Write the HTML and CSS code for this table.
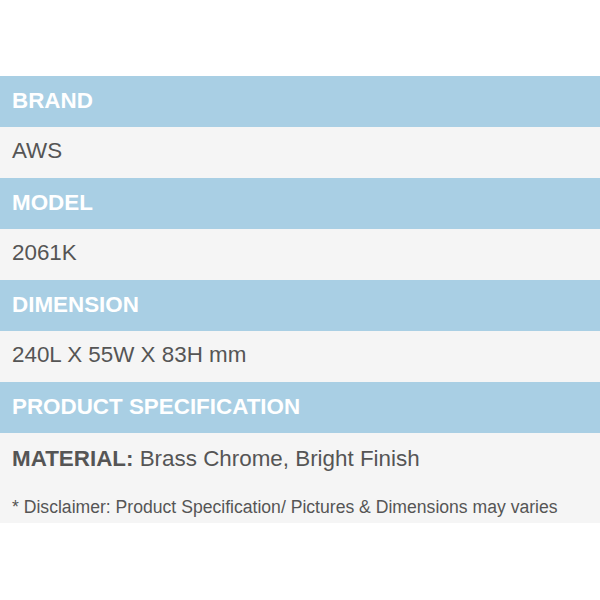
FILE: index.html
```html
<!DOCTYPE html>
<html>
<head>
<meta charset="utf-8">
<link rel="stylesheet" href="styles.css">
</head>
<body>
<div class="spec">
  <div class="head">BRAND</div>
  <div class="row">AWS</div>
  <div class="head">MODEL</div>
  <div class="row">2061K</div>
  <div class="head">DIMENSION</div>
  <div class="row">240L X 55W X 83H mm</div>
  <div class="head">PRODUCT SPECIFICATION</div>
  <div class="final">
    <div class="material"><b>MATERIAL:</b> Brass Chrome, Bright Finish</div>
    <div class="disclaimer">* Disclaimer: Product Specification/ Pictures &amp; Dimensions may varies</div>
  </div>
</div>
</body>
</html>
```
FILE: styles.css
```css
html, body {
  margin: 0;
  padding: 0;
  background: #ffffff;
}
body {
  font-family: "Liberation Sans", Arial, sans-serif;
  width: 600px;
  height: 600px;
  overflow: hidden;
}
.spec {
  margin-top: 76px;
  display: flex;
  flex-direction: column;
}
.head {
  height: 51px;
  background: #a9cfe4;
  color: #ffffff;
  font-weight: bold;
  font-size: 22.4px;
  display: flex;
  align-items: center;
  padding-left: 12px;
  padding-bottom: 1px;
  box-sizing: border-box;
}
.row {
  height: 51px;
  background: #f5f5f5;
  color: #555555;
  font-size: 22.4px;
  display: flex;
  align-items: center;
  padding-left: 12px;
  padding-bottom: 4px;
  box-sizing: border-box;
}
.final {
  height: 90px;
  background: #f5f5f5;
  padding-left: 12px;
  padding-top: 13px;
  box-sizing: border-box;
  color: #555555;
}
.material {
  font-size: 22.4px;
  line-height: 26px;
}
.material b {
  color: #555555;
}
.disclaimer {
  font-size: 17.6px;
  margin-top: 25px;
  line-height: 20px;
}
```
